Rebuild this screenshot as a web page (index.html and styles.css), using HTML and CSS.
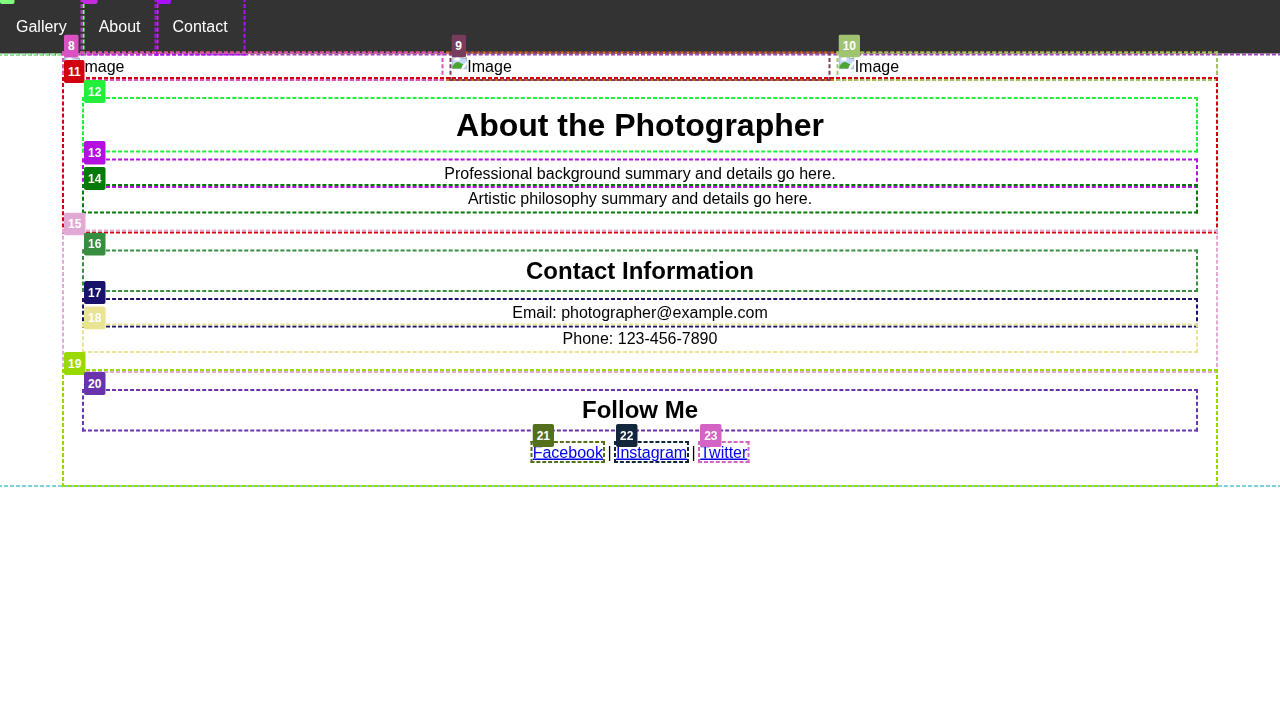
FILE: index.html
```
<!DOCTYPE html>
<html lang="en">
<head>
<meta charset="utf-8">
<title>Photographer Portfolio</title>
<link rel="stylesheet" href="styles.css">
</head>
<body>
<svg class="defs" width="0" height="0">
  <symbol id="broken" viewBox="0 0 16 16">
    <path d="M0.5 0.5H11L15.5 5V15.500H0.5Z" fill="#c3d9f7" stroke="#a9b0b8"/>
    <path d="M11 0.5V5H15.5Z" fill="#fff" stroke="#a9b0b8"/>
    <path d="M3 7a1.500 1.500 0 0 1 1-2.500 2 2 0 0 1 4 1 1 1 0 0 1 0 1.500Z" fill="#fff"/>
    <path d="M1 12.500Q5 6.500 9 9.500L12 11V15H1Z" fill="#4ba532"/>
    <path d="M16 7V10L12 15V16H9.500L11 12Z" fill="#fff"/>
  </symbol>
</svg>
<div class="page box cyan">
  <nav class="nav box violet">
    <a class="box mint"><b class="tag blank"></b>Gallery</a>
    <a class="box orchid"><b class="tag blank"></b>About</a>
    <a class="box purple"><b class="tag blank"></b>Contact</a>
  </nav>
  <main class="content">
    <div class="gallery box orange">
      <div class="photo box pink"><b class="tag">8</b><svg class="icon"><use href="#broken"/></svg>Image</div>
      <div class="photo box plum"><b class="tag">9</b><svg class="icon"><use href="#broken"/></svg>Image</div>
      <div class="photo box sage"><b class="tag">10</b><svg class="icon"><use href="#broken"/></svg>Image</div>
    </div>
    <section class="section box red"><b class="tag">11</b>
      <h1 class="box lime"><b class="tag">12</b>About the Photographer</h1>
      <p class="box magenta"><b class="tag">13</b>Professional background summary and details go here.</p>
      <p class="box green"><b class="tag">14</b>Artistic philosophy summary and details go here.</p>
    </section>
    <section class="section box rose"><b class="tag">15</b>
      <h2 class="box fern"><b class="tag">16</b>Contact Information</h2>
      <p class="box navy"><b class="tag">17</b>Email: photographer@example.com</p>
      <p class="box sand"><b class="tag">18</b>Phone: 123-456-7890</p>
    </section>
    <section class="section box apple"><b class="tag">19</b>
      <h2 class="box indigo"><b class="tag">20</b>Follow Me</h2>
      <div><a class="link box olive" href="#"><b class="tag">21</b>Facebook</a> | <a class="link box ink" href="#"><b class="tag">22</b>Instagram</a> | <a class="link box candy" href="#"><b class="tag">23</b>Twitter</a></div>
    </section>
  </main>
</div>
</body>
</html>
```
FILE: styles.css
```
* { box-sizing: border-box; margin: 0; padding: 0; }
html { overflow: hidden; }
body { width: 1280px; height: 720px; font: 16px/1.6 "Liberation Sans", Arial, sans-serif; color: #000; background: #fff; overflow: hidden; }
.defs { position: absolute; }
.page { width: 1280px; zoom: 2; transform: scale(.5); transform-origin: 0 0; }
.box { position: relative; outline: 2px dashed var(--c); }
.tag {
  position: absolute;
  z-index: 1;
  top: -19.2px;
  left: 0;
  padding: 2px 4px;
  border-radius: 2px;
  background: var(--c);
  color: #fff;
  font: bold 12px/19.2px "Liberation Sans", Arial, sans-serif;
}
.tag.blank { width: 14.7px; height: 23.2px; }
.nav { display: flex; background: #333; }
.nav a { padding: 14px 16px; color: #fff; }
.content { width: 90%; margin: 0 auto; }
.gallery { display: grid; grid-template-columns: repeat(3, 1fr); gap: 10px; }
.photo { height: 25.6px; }
.icon { width: 16px; height: 16px; vertical-align: 2px; }
.section { padding: 20px; text-align: center; }
h1, h2 { margin-bottom: 10px; }
h1 { font-size: 32px; }
h2 { font-size: 24px; }
.link { color: #0000ee; text-decoration: underline; }

.cyan { --c: #7ad3dd; }
.violet { --c: #9c46b4; }
.mint { --c: #80ff80; }
.orchid { --c: #c22be0; }
.purple { --c: #a80fff; }
.orange { --c: #e07010; }
.pink { --c: #da52c1; }
.plum { --c: #783c5c; }
.sage { --c: #9fc36f; }
.red { --c: #d2000f; }
.lime { --c: #22ee3c; }
.magenta { --c: #b30fe0; }
.green { --c: #067a06; }
.rose { --c: #e2a9d4; }
.fern { --c: #378e3e; }
.navy { --c: #18126b; }
.sand { --c: #e9e494; }
.apple { --c: #99d900; }
.indigo { --c: #6933ab; }
.olive { --c: #54701f; }
.ink { --c: #12273c; }
.candy { --c: #d364c3; }
```
